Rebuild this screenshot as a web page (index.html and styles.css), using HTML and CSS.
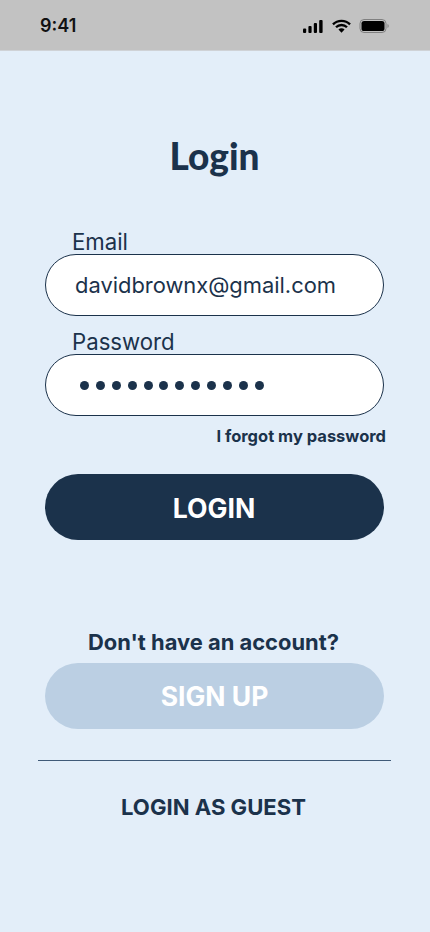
FILE: index.html
```html
<!DOCTYPE html>
<html lang="en">
<head>
<meta charset="utf-8">
<title>Login</title>
<link rel="stylesheet" href="styles.css">
</head>
<body>
<div class="status">
  <span class="time">9:41</span>
  <div class="status-icons">
    <svg class="ic-signal" width="20" height="13" viewBox="0 0 20 13"><rect x="0" y="8.5" width="3.2" height="4.5" rx="1"/><rect x="5.4" y="6" width="3.2" height="7" rx="1"/><rect x="10.8" y="3" width="3.2" height="10" rx="1"/><rect x="16.2" y="0" width="3.4" height="13" rx="1"/></svg>
    <svg class="ic-wifi" width="19" height="14" viewBox="0 0 18 13"><path d="M0.9 5A11.6 11.6 0 0 1 17.1 5" fill="none" stroke="#000" stroke-width="2.2"/><path d="M3.8 7.7a7.3 7.3 0 0 1 10.4 0" fill="none" stroke="#000" stroke-width="2.2"/><path d="M6.1 9.9a4 4 0 0 1 5.8 0L9 13z"/></svg>
    <svg class="ic-batt" width="31" height="14" viewBox="0 0 30 14"><rect x="0.5" y="0.5" width="26" height="13" rx="4" fill="none" stroke="#808080"/><rect x="2" y="2" width="23" height="10" rx="2.6"/><path d="M28 5v4a2 2 0 0 0 1.2-2A2 2 0 0 0 28 5z" fill="#808080"/></svg>
  </div>
</div>
<main class="page">
  <h1 class="title">Login</h1>
  <form class="form">
    <label class="label">Email</label>
    <div class="field">davidbrownx@gmail.com</div>
    <label class="label label-pass">Password</label>
    <div class="field field-pass">
      <i class="dot"></i><i class="dot"></i><i class="dot"></i><i class="dot"></i><i class="dot"></i><i class="dot"></i><i class="dot"></i><i class="dot"></i><i class="dot"></i><i class="dot"></i><i class="dot"></i><i class="dot"></i>
    </div>
    <a class="forgot">I forgot my password</a>
    <div class="btn btn-login">LOGIN</div>
  </form>
  <p class="prompt">Don't have an account?</p>
  <div class="btn btn-signup">SIGN UP</div>
  <hr class="rule">
  <a class="guest">LOGIN AS GUEST</a>
</main>
</body>
</html>
```
FILE: styles.css
```css
* { box-sizing: border-box; }
html, body { margin: 0; padding: 0; }
body {
  width: 430px;
  height: 932px;
  overflow: hidden;
  background: #e3eef9;
  color: #1b324b;
  font-family: Inter, "Liberation Sans", sans-serif;
  display: flex;
  flex-direction: column;
}
.status {
  height: 51px;
  flex: none;
  background: #c2c2c2;
  display: flex;
  align-items: center;
  justify-content: space-between;
  padding: 2px 40px 0 40px;
  border-bottom: 1px solid #cfd2d6;
  color: #111;
}
.time { font-size: 18px; font-weight: 600; line-height: 20px; }
.status-icons { display: flex; align-items: center; gap: 8.5px; }
.page {
  flex: 1;
  display: flex;
  flex-direction: column;
  align-items: center;
  padding: 83px 46px 0 45px;
}
.title {
  margin: 0;
  font-family: Lato, Inter, sans-serif;
  font-weight: 900;
  font-size: 37px;
  line-height: 44px;
  color: #1b324b;
}
.form {
  margin-top: 51px;
  width: 339px;
  display: flex;
  flex-direction: column;
}
.label {
  font-size: 22.2px;
  line-height: 25px;
  padding-left: 27px;
  height: 25px;
  color: #1b324b;
}
.label-pass { margin-top: 13px; }
.field {
  height: 62px;
  background: #fff;
  border: 1px solid #1b324b;
  border-radius: 31px;
  display: flex;
  align-items: center;
  padding: 0 0 0 29px;
  font-size: 21.9px;
  color: #1b324b;
}
.field-pass { padding-left: 34px; gap: 6.9px; }
.dot {
  width: 9px;
  height: 9px;
  border-radius: 50%;
  background: #1b324b;
  flex: none;
}
.forgot {
  align-self: flex-end;
  margin: 9px -2px 0 0;
  font-size: 16.5px;
  line-height: 22px;
  font-weight: 700;
}
.btn {
  width: 339px;
  height: 66px;
  border-radius: 33px;
  display: flex;
  align-items: center;
  justify-content: center;
  color: #fff;
  font-weight: 700;
  flex: none;
}
.btn-login { background: #1b324b; margin-top: 27px; padding: 1px 1px 0 0; font-size: 26.6px; }
.btn-signup { background: #bbcfe3; font-size: 26.5px; }
.prompt {
  margin: 88px 2px 7px 0;
  font-size: 21.9px;
  line-height: 28px;
  font-weight: 700;
}
.rule {
  width: 353px;
  height: 1px;
  flex: none;
  border: 0;
  margin: 31px 0 0;
  background: #3f5a78;
}
.guest {
  margin: 32px 2px 0 0;
  font-size: 22.1px;
  line-height: 28px;
  font-weight: 700;
}
```
